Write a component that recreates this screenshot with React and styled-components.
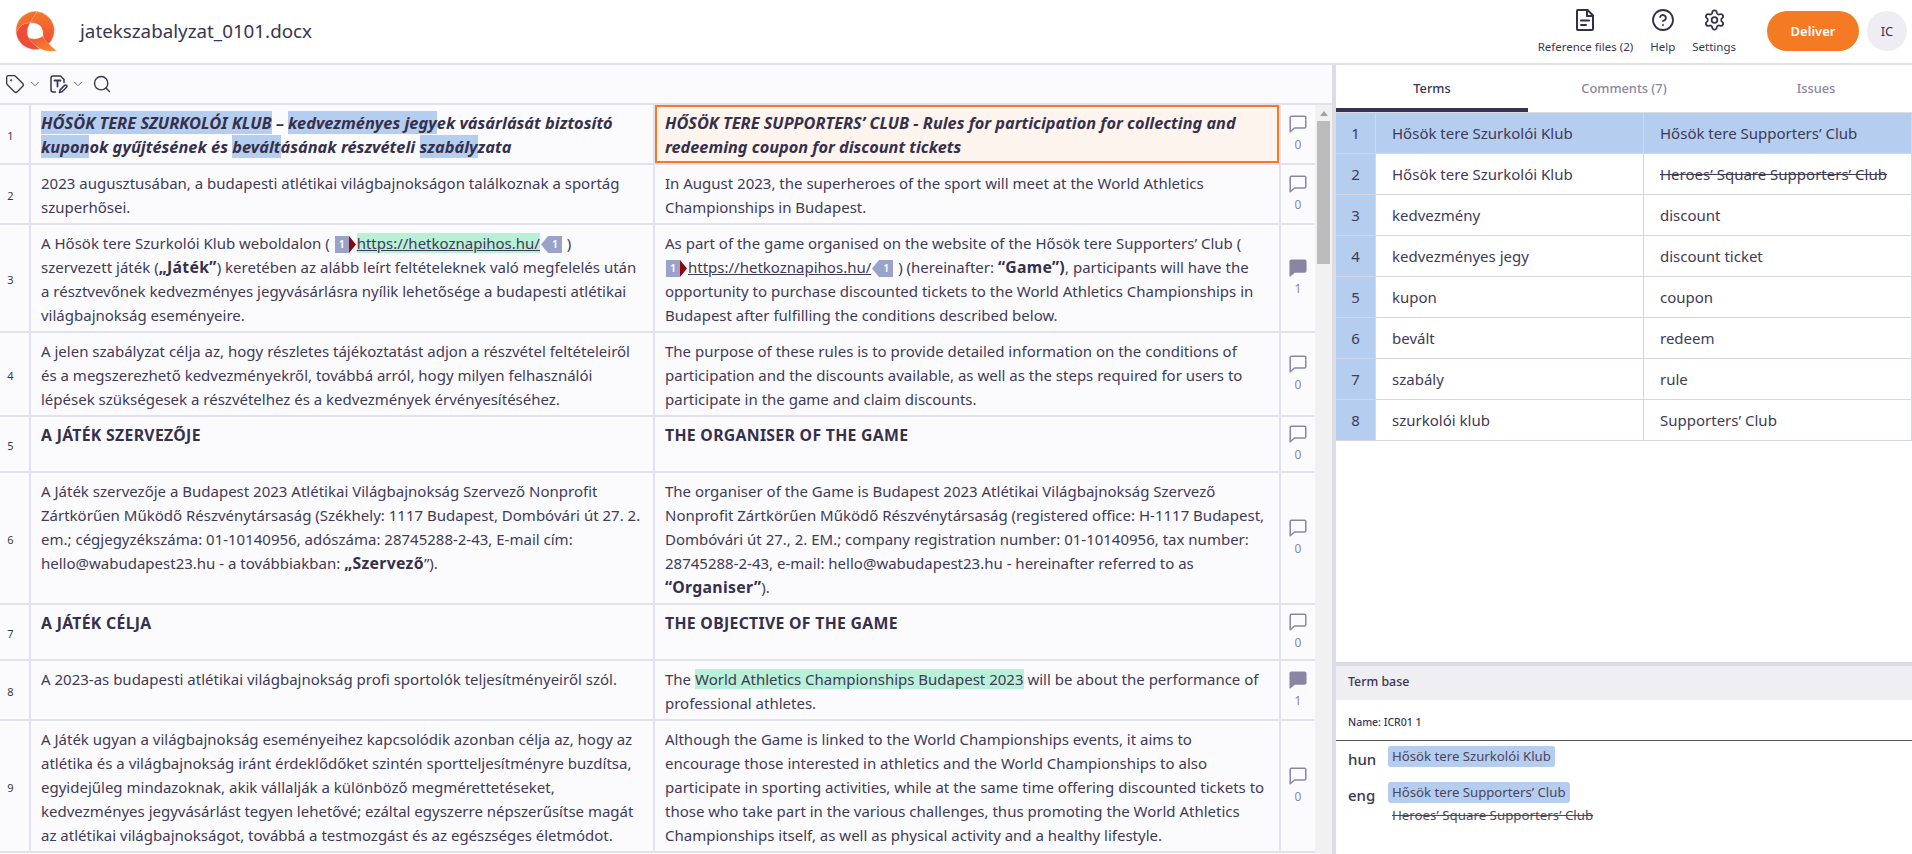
import React from "react";
import styled, { createGlobalStyle } from "styled-components";
import { ChevronDown, CircleHelp, Search, Settings, Tag } from "lucide-react";

const GlobalStyle = createGlobalStyle`
  html, body {
    margin: 0;
    height: 100%;
    overflow: hidden;
    background: #fff;
  }
  body {
    font-family: "Noto Sans", "Open Sans", sans-serif;
    color: #3a3550;
  }
  * {
    box-sizing: border-box;
  }
`;

const Page = styled.div`
  width: 1912px;
  height: 854px;
  display: flex;
  flex-direction: column;
  overflow: hidden;
`;

const Header = styled.header`
  height: 65px;
  flex: none;
  display: flex;
  align-items: center;
  background: #fff;
  border-bottom: 2px solid #e1e1e6;
  padding: 0 5px 1px 15px;
`;

const LogoWrap = styled.div`
  width: 42px;
  height: 42px;
  display: flex;
`;

const FileName = styled.h1`
  margin: 0 0 0 23px;
  font-size: 18.8px;
  font-weight: 400;
  color: #3a3550;
`;

const HeaderActions = styled.div`
  margin-left: auto;
  display: flex;
  align-items: flex-start;
  gap: 17px;
`;

const HeaderAction = styled.div`
  display: flex;
  flex-direction: column;
  align-items: center;
  gap: 7px;
  color: #332e4c;
  svg {
    height: 24px;
  }
  span {
    font-size: 11.5px;
    line-height: 15px;
    color: #3a3550;
  }
`;

const DeliverButton = styled.button`
  width: 92px;
  height: 40px;
  margin-left: 31px;
  border: 0;
  border-radius: 20px;
  background: #f57a24;
  color: #fff;
  font-family: inherit;
  font-size: 13px;
  font-weight: 600;
`;

const Avatar = styled.div`
  width: 40px;
  height: 40px;
  margin-left: 8px;
  border-radius: 50%;
  background: #ededf3;
  display: flex;
  align-items: center;
  justify-content: center;
  font-size: 13px;
  color: #3a3550;
`;

const Main = styled.main`
  flex: 1;
  min-height: 0;
  display: flex;
`;

const Editor = styled.section`
  width: 1332px;
  flex: none;
  display: flex;
  flex-direction: column;
  background: #fbfbfe;
`;

const Toolbar = styled.div`
  height: 40px;
  flex: none;
  display: flex;
  align-items: center;
  padding-left: 5px;
  border-bottom: 2px solid #e1e1ea;
  color: #3a3550;
  svg {
    flex: none;
  }
`;

const SmallChevron = styled(ChevronDown)`
  margin: 0 6px 0 3px;
  color: #55506b;
`;

const SearchIcon = styled(Search)`
  margin-left: 1px;
`;

const GridArea = styled.div`
  flex: 1;
  min-height: 0;
  display: flex;
`;

const Segments = styled.div`
  width: 1315px;
  flex: none;
  overflow: hidden;
`;

const Segment = styled.div`
  display: grid;
  grid-template-columns: 31px 624px 624px 36px;
  min-height: 56px;
  border-bottom: 2px solid #e2e2ec;
`;

const RowNumber = styled.div`
  border-right: 2px solid #e2e2ec;
  padding: 2px 8px 0 0;
  display: flex;
  align-items: center;
  justify-content: center;
  font-size: 11px;
  color: #3a3550;
`;

const SourceCell = styled.div`
  border-right: 2px solid #e2e2ec;
  padding: 6px 10px 4px;
  font-size: 15px;
  line-height: 24px;
  color: #3f3a56;
  strong {
    font-size: 15.8px;
    letter-spacing: 0.3px;
    line-height: 1;
    font-weight: 700;
    color: #35304c;
  }
  em {
    font-size: 16.4px;
    letter-spacing: 0;
  }
  mark {
    background: #b5cdef;
    color: inherit;
  }
`;

const TargetCell = styled.div`
  padding: ${({ $active }) => ($active ? "4px 8px 2px" : "6px 10px 4px")};
  font-size: 15px;
  line-height: 24px;
  color: #3f3a56;
  border: ${({ $active }) => ($active ? "2px solid #f57a24" : "0")};
  background: ${({ $active }) => ($active ? "#fdf4ee" : "transparent")};
  strong {
    font-size: 15.8px;
    letter-spacing: 0.3px;
    line-height: 1;
    font-weight: 700;
    color: #35304c;
  }
  em {
    font-size: 16.3px;
    letter-spacing: 0;
  }
`;

const CommentCell = styled.div`
  border-left: 2px solid #e2e2ec;
  display: flex;
  flex-direction: column;
  align-items: center;
  justify-content: center;
  gap: 4px;
  font-size: 12px;
  line-height: 16px;
  color: #8a85a3;
`;

const GreenMark = styled.span`
  background: #b8f0d8;
`;

const LinkGroup = styled.span`
  white-space: nowrap;
`;

const LinkMark = styled.span`
  background: #b8f0d8;
  text-decoration: underline;
`;

const LinkPlain = styled.span`
  text-decoration: underline;
`;

const TagWrap = styled.span`
  display: inline-flex;
  align-items: center;
  vertical-align: middle;
  height: 17px;
  margin: 0 1px;
`;

const TagBox = styled.span`
  width: 14px;
  height: 17px;
  background: #9aa3c7;
  color: #fff;
  font-size: 10.5px;
  line-height: 17px;
  font-weight: 600;
  text-align: center;
`;

const TagArrow = styled.svg`
  width: 7px;
  height: 17px;
`;

const ScrollTrack = styled.div`
  width: 17px;
  flex: none;
  background: #f1f1f1;
  display: flex;
  flex-direction: column;
  align-items: center;
`;

const ScrollArrow = styled.div`
  margin: 6px 0 5px;
  width: 0;
  height: 0;
  border-left: 4px solid transparent;
  border-right: 4px solid transparent;
  border-bottom: 5px solid #a3a3a3;
`;

const ScrollThumb = styled.div`
  width: 13px;
  height: 143px;
  background: #bcbcbc;
`;

const Side = styled.aside`
  flex: 1;
  min-width: 0;
  border-left: 4px solid #dcdce6;
  display: flex;
  flex-direction: column;
  background: #fff;
`;

const Tabs = styled.nav`
  height: 48px;
  flex: none;
  display: grid;
  grid-template-columns: repeat(3, 1fr);
  border-bottom: 1px solid #dcdce6;
`;

const TabItem = styled.div`
  display: flex;
  align-items: center;
  justify-content: center;
  padding-top: 3px;
  font-size: 12.8px;
  font-weight: 500;
  color: ${({ $active }) => ($active ? "#3a3550" : "#8a85a3")};
  border-bottom: 4px solid ${({ $active }) => ($active ? "#37324e" : "transparent")};
`;

const TermList = styled.div`
  flex: 1;
  min-height: 0;
`;

const TermRow = styled.div`
  display: grid;
  grid-template-columns: 40px 268px 1fr;
  height: 41px;
  background: ${({ $selected }) => ($selected ? "#b5cdef" : "#fff")};
  border-bottom: 1px solid #d5d5e4;
`;

const TermNumber = styled.div`
  background: #b5cdef;
  border-right: 1px solid #d5d5e4;
  display: flex;
  align-items: center;
  justify-content: center;
  font-size: 15px;
  color: #3f3a56;
`;

const TermCell = styled.div`
  display: flex;
  align-items: center;
  padding-left: 16px;
  font-size: 15px;
  color: #3f3a56;
  white-space: nowrap;
  border-right: 1px solid #d5d5e4;
  text-decoration: ${({ $forbidden }) => ($forbidden ? "line-through" : "none")};
`;

const TermBase = styled.section`
  height: 192px;
  flex: none;
  border-top: 4px solid #dcdce6;
`;

const TermBaseTitle = styled.div`
  height: 34px;
  display: flex;
  align-items: center;
  padding: 0 0 3px 12px;
  background: #eeeef3;
  font-size: 12.4px;
  font-weight: 500;
  color: #3a3550;
`;

const TermBaseName = styled.div`
  height: 41px;
  padding: 15px 0 0 12px;
  border-bottom: 1px solid #555;
  font-size: 10.5px;
  font-weight: 500;
  color: #3a3550;
  margin-bottom: 5px;
`;

const LangRow = styled.div`
  display: flex;
  margin-bottom: 13px;
  padding-left: 12px;
`;

const LangLabel = styled.div`
  width: 40px;
  padding-top: 3px;
  font-size: 15px;
  font-weight: 500;
  line-height: 20px;
  color: #3a3550;
`;

const LangTerms = styled.div`
  display: flex;
  flex-direction: column;
  align-items: flex-start;
`;

const Chip = styled.span`
  height: 21px;
  padding: 0 4px;
  border-radius: 3px;
  background: #b5cdef;
  font-size: 13.2px;
  line-height: 21px;
  color: #4a4561;
`;

const StruckTerm = styled.span`
  margin-top: 2px;
  padding-left: 4px;
  font-size: 13.3px;
  line-height: 20px;
  color: #4a4561;
  text-decoration: line-through;
`;

function Logo() {
  return (
    <svg width="42" height="42" viewBox="0 0 42 42">
      <defs>
        <linearGradient id="logoA" x1="0" y1="0" x2="1" y2="1">
          <stop offset="0" stopColor="#f58a26" />
          <stop offset="1" stopColor="#f0493a" />
        </linearGradient>
        <linearGradient id="logoB" x1="0" y1="0" x2="1" y2="1">
          <stop offset="0" stopColor="#f0503a" />
          <stop offset="1" stopColor="#f68c22" />
        </linearGradient>
        <linearGradient id="logoC" x1="0" y1="0" x2="0" y2="1">
          <stop offset="0" stopColor="#f57a28" />
          <stop offset="1" stopColor="#ef4b38" />
        </linearGradient>
      </defs>
      <g stroke="#fbb08a" strokeWidth="0.4">
        <path d="M22 1.6A19 19 0 0 0 1.2 23C4 16 9 12.5 15 13 17 9 20 5 22 1.6z" fill="url(#logoA)" />
        <path d="M22 1.6C20 5 17 9 15 13c7-1 13 4 13 11 0 3 1 6 4.5 11A19 19 0 0 0 22 1.6z" fill="url(#logoC)" />
        <path d="M1.2 23C4 16 9 12.5 15 13c-3 5-4 11-1 15 3 4 6 8 11 10.8A19 19 0 0 1 1.2 23z" fill="#f04a3a" />
        <path d="M14 28c6 2 11 .5 13.5-2 2.5 5 8.5 10 14 15H34c-6 0-16-5-20-13z" fill="url(#logoB)" />
      </g>
      <circle cx="20.5" cy="21" r="7" fill="#fff" />
    </svg>
  );
}

function ReferenceIcon() {
  return (
    <svg width="24" height="24" viewBox="0 0 24 24" fill="none" stroke="#332e4c" strokeWidth="2" strokeLinecap="round" strokeLinejoin="round">
      <path d="M14.5 2H5a1 1 0 0 0-1 1v18a1 1 0 0 0 1 1h14a1 1 0 0 0 1-1V7.5z" />
      <path d="M14 2.5V8h5.5" />
      <path d="M8 12.5h8M8 17h5" />
    </svg>
  );
}

function FileEditIcon() {
  return (
    <svg width="20" height="20" viewBox="0 0 20 20" fill="none" stroke="#3a3550" strokeWidth="1.5" strokeLinecap="round" strokeLinejoin="round">
      <path d="M7.5 18H5a2 2 0 0 1-2-2V4a2 2 0 0 1 2-2h7.5L16 5.5v3" />
      <path d="M6.5 6.5h6M9.5 6.5v6" strokeWidth="1.8" />
      <path d="M11.5 18.5l.6-2.600 4.500-4.500a1.300 1.300 0 0 1 1.900 1.900L14 17.800z" />
    </svg>
  );
}

function CommentIcon({ filled }) {
  return (
    <svg width="18" height="18" viewBox="0 0 18 18" fill={filled ? "#8a85a3" : "none"} stroke="#8a85a3" strokeWidth="1.5" strokeLinejoin="round">
      <path d="M2.5 1.2h13a1.3 1.3 0 0 1 1.3 1.3v9.2a1.3 1.3 0 0 1-1.3 1.3H5.5L1.2 16.8V2.5a1.3 1.3 0 0 1 1.3-1.3z" />
    </svg>
  );
}

function StartTag() {
  return (
    <TagWrap>
      <TagBox>1</TagBox>
      <TagArrow viewBox="0 0 7 17">
        <path d="M0 0l7 8.5-7 8.5z" fill="#8c0610" />
      </TagArrow>
    </TagWrap>
  );
}

function EndTag() {
  return (
    <TagWrap>
      <TagArrow viewBox="0 0 7 17">
        <path d="M7 0L0 8.5 7 17z" fill="#9aa3c7" />
      </TagArrow>
      <TagBox>1</TagBox>
    </TagWrap>
  );
}

const rows = [
  {
    id: 1,
    source: (
      <strong>
        <em>
          <mark>HŐSÖK TERE SZURKOLÓI KLUB</mark> – <mark>kedvezményes jegy</mark>ek vásárlását biztosító{" "}
          <mark>kupon</mark>ok gyűjtésének és <mark>bevált</mark>ásának részvételi <mark>szabály</mark>zata
        </em>
      </strong>
    ),
    target: (
      <strong>
        <em>
          HŐSÖK TERE SUPPORTERS’ CLUB - Rules for participation for collecting and redeeming coupon for discount
          tickets
        </em>
      </strong>
    ),
    active: true,
    comments: 0,
  },
  {
    id: 2,
    source: "2023 augusztusában, a budapesti atlétikai világbajnokságon találkoznak a sportág szuperhősei.",
    target: "In August 2023, the superheroes of the sport will meet at the World Athletics Championships in Budapest.",
    comments: 0,
  },
  {
    id: 3,
    source: (
      <>
        A Hősök tere Szurkolói Klub weboldalon ({" "}
        <LinkGroup>
          <StartTag />
          <LinkMark>https://hetkoznapihos.hu/</LinkMark>
          <EndTag />
        </LinkGroup>{" "}
        ) szervezett játék (<strong>„Játék”</strong>) keretében az alább leírt feltételeknek való megfelelés után a
        résztvevőnek kedvezményes jegyvásárlásra nyílik lehetősége a budapesti atlétikai világbajnokság eseményeire.
      </>
    ),
    target: (
      <>
        As part of the game organised on the website of the Hősök tere Supporters’ Club ({" "}
        <LinkGroup>
          <StartTag />
          <LinkPlain>https://hetkoznapihos.hu/</LinkPlain>
          <EndTag />
        </LinkGroup>{" "}
        ) (hereinafter: <strong>“Game”)</strong>, participants will have the opportunity to purchase discounted tickets
        to the World Athletics Championships in Budapest after fulfilling the conditions described below.
      </>
    ),
    comments: 1,
  },
  {
    id: 4,
    source:
      "A jelen szabályzat célja az, hogy részletes tájékoztatást adjon a részvétel feltételeiről és a megszerezhető kedvezményekről, továbbá arról, hogy milyen felhasználói lépések szükségesek a részvételhez és a kedvezmények érvényesítéséhez.",
    target:
      "The purpose of these rules is to provide detailed information on the conditions of participation and the discounts available, as well as the steps required for users to participate in the game and claim discounts.",
    comments: 0,
  },
  {
    id: 5,
    source: <strong>A JÁTÉK SZERVEZŐJE</strong>,
    target: <strong>THE ORGANISER OF THE GAME</strong>,
    comments: 0,
  },
  {
    id: 6,
    source: (
      <>
        A Játék szervezője a Budapest 2023 Atlétikai Világbajnokság Szervező Nonprofit Zártkörűen Működő Részvénytársaság
        (Székhely: 1117 Budapest, Dombóvári út 27. 2. em.; cégjegyzékszáma: 01-10140956, adószáma: 28745288-2-43, E-mail
        cím: hello@wabudapest23.hu - a továbbiakban: <strong>„Szervező</strong>”).
      </>
    ),
    target: (
      <>
        The organiser of the Game is Budapest 2023 Atlétikai Világbajnokság Szervező Nonprofit Zártkörűen Működő
        Részvénytársaság (registered office: H-1117 Budapest, Dombóvári út 27., 2. EM.; company registration number:
        01-10140956, tax number: 28745288-2-43, e-mail: hello@wabudapest23.hu - hereinafter referred to as{" "}
        <strong>“Organiser”</strong>).
      </>
    ),
    comments: 0,
  },
  {
    id: 7,
    source: <strong>A JÁTÉK CÉLJA</strong>,
    target: <strong>THE OBJECTIVE OF THE GAME</strong>,
    comments: 0,
  },
  {
    id: 8,
    source: "A 2023-as budapesti atlétikai világbajnokság profi sportolók teljesítményeiről szól.",
    target: (
      <>
        The <GreenMark>World Athletics Championships Budapest 2023</GreenMark> will be about the performance of
        professional athletes.
      </>
    ),
    comments: 1,
  },
  {
    id: 9,
    source:
      "A Játék ugyan a világbajnokság eseményeihez kapcsolódik azonban célja az, hogy az atlétika és a világbajnokság iránt érdeklődőket szintén sportteljesítményre buzdítsa, egyidejűleg mindazoknak, akik vállalják a különböző megmérettetéseket, kedvezményes jegyvásárlást tegyen lehetővé; ezáltal egyszerre népszerűsítse magát az atlétikai világbajnokságot, továbbá a testmozgást és az egészséges életmódot.",
    target:
      "Although the Game is linked to the World Championships events, it aims to encourage those interested in athletics and the World Championships to also participate in sporting activities, while at the same time offering discounted tickets to those who take part in the various challenges, thus promoting the World Athletics Championships itself, as well as physical activity and a healthy lifestyle.",
    comments: 0,
  },
];

const terms = [
  { id: 1, source: "Hősök tere Szurkolói Klub", target: "Hősök tere Supporters’ Club", selected: true },
  { id: 2, source: "Hősök tere Szurkolói Klub", target: "Heroes’ Square Supporters’ Club", forbidden: true },
  { id: 3, source: "kedvezmény", target: "discount" },
  { id: 4, source: "kedvezményes jegy", target: "discount ticket" },
  { id: 5, source: "kupon", target: "coupon" },
  { id: 6, source: "bevált", target: "redeem" },
  { id: 7, source: "szabály", target: "rule" },
  { id: 8, source: "szurkolói klub", target: "Supporters’ Club" },
];

export default function App() {
  return (
    <Page>
      <GlobalStyle />
      <Header>
        <LogoWrap>
          <Logo />
        </LogoWrap>
        <FileName>jatekszabalyzat_0101.docx</FileName>
        <HeaderActions>
          <HeaderAction>
            <ReferenceIcon />
            <span>Reference files (2)</span>
          </HeaderAction>
          <HeaderAction>
            <CircleHelp size={24} strokeWidth={1.8} />
            <span>Help</span>
          </HeaderAction>
          <HeaderAction>
            <Settings size={23} strokeWidth={1.8} />
            <span>Settings</span>
          </HeaderAction>
        </HeaderActions>
        <DeliverButton>Deliver</DeliverButton>
        <Avatar>IC</Avatar>
      </Header>
      <Main>
        <Editor>
          <Toolbar>
            <Tag size={20} strokeWidth={1.6} />
            <SmallChevron size={14} strokeWidth={1.5} />
            <FileEditIcon />
            <SmallChevron size={14} strokeWidth={1.5} />
            <SearchIcon size={20} strokeWidth={1.7} />
          </Toolbar>
          <GridArea>
            <Segments>
              {rows.map((row) => (
                <Segment key={row.id}>
                  <RowNumber>{row.id}</RowNumber>
                  <SourceCell>{row.source}</SourceCell>
                  <TargetCell $active={row.active}>{row.target}</TargetCell>
                  <CommentCell>
                    <CommentIcon filled={row.comments > 0} />
                    <span>{row.comments}</span>
                  </CommentCell>
                </Segment>
              ))}
            </Segments>
            <ScrollTrack>
              <ScrollArrow />
              <ScrollThumb />
            </ScrollTrack>
          </GridArea>
        </Editor>
        <Side>
          <Tabs>
            <TabItem $active>Terms</TabItem>
            <TabItem>Comments (7)</TabItem>
            <TabItem>Issues</TabItem>
          </Tabs>
          <TermList>
            {terms.map((term) => (
              <TermRow key={term.id} $selected={term.selected}>
                <TermNumber>{term.id}</TermNumber>
                <TermCell>{term.source}</TermCell>
                <TermCell $forbidden={term.forbidden}>{term.target}</TermCell>
              </TermRow>
            ))}
          </TermList>
          <TermBase>
            <TermBaseTitle>Term base</TermBaseTitle>
            <TermBaseName>Name: ICR01 1</TermBaseName>
            <LangRow>
              <LangLabel>hun</LangLabel>
              <LangTerms>
                <Chip>Hősök tere Szurkolói Klub</Chip>
              </LangTerms>
            </LangRow>
            <LangRow>
              <LangLabel>eng</LangLabel>
              <LangTerms>
                <Chip>Hősök tere Supporters’ Club</Chip>
                <StruckTerm>Heroes’ Square Supporters’ Club</StruckTerm>
              </LangTerms>
            </LangRow>
          </TermBase>
        </Side>
      </Main>
    </Page>
  );
}
